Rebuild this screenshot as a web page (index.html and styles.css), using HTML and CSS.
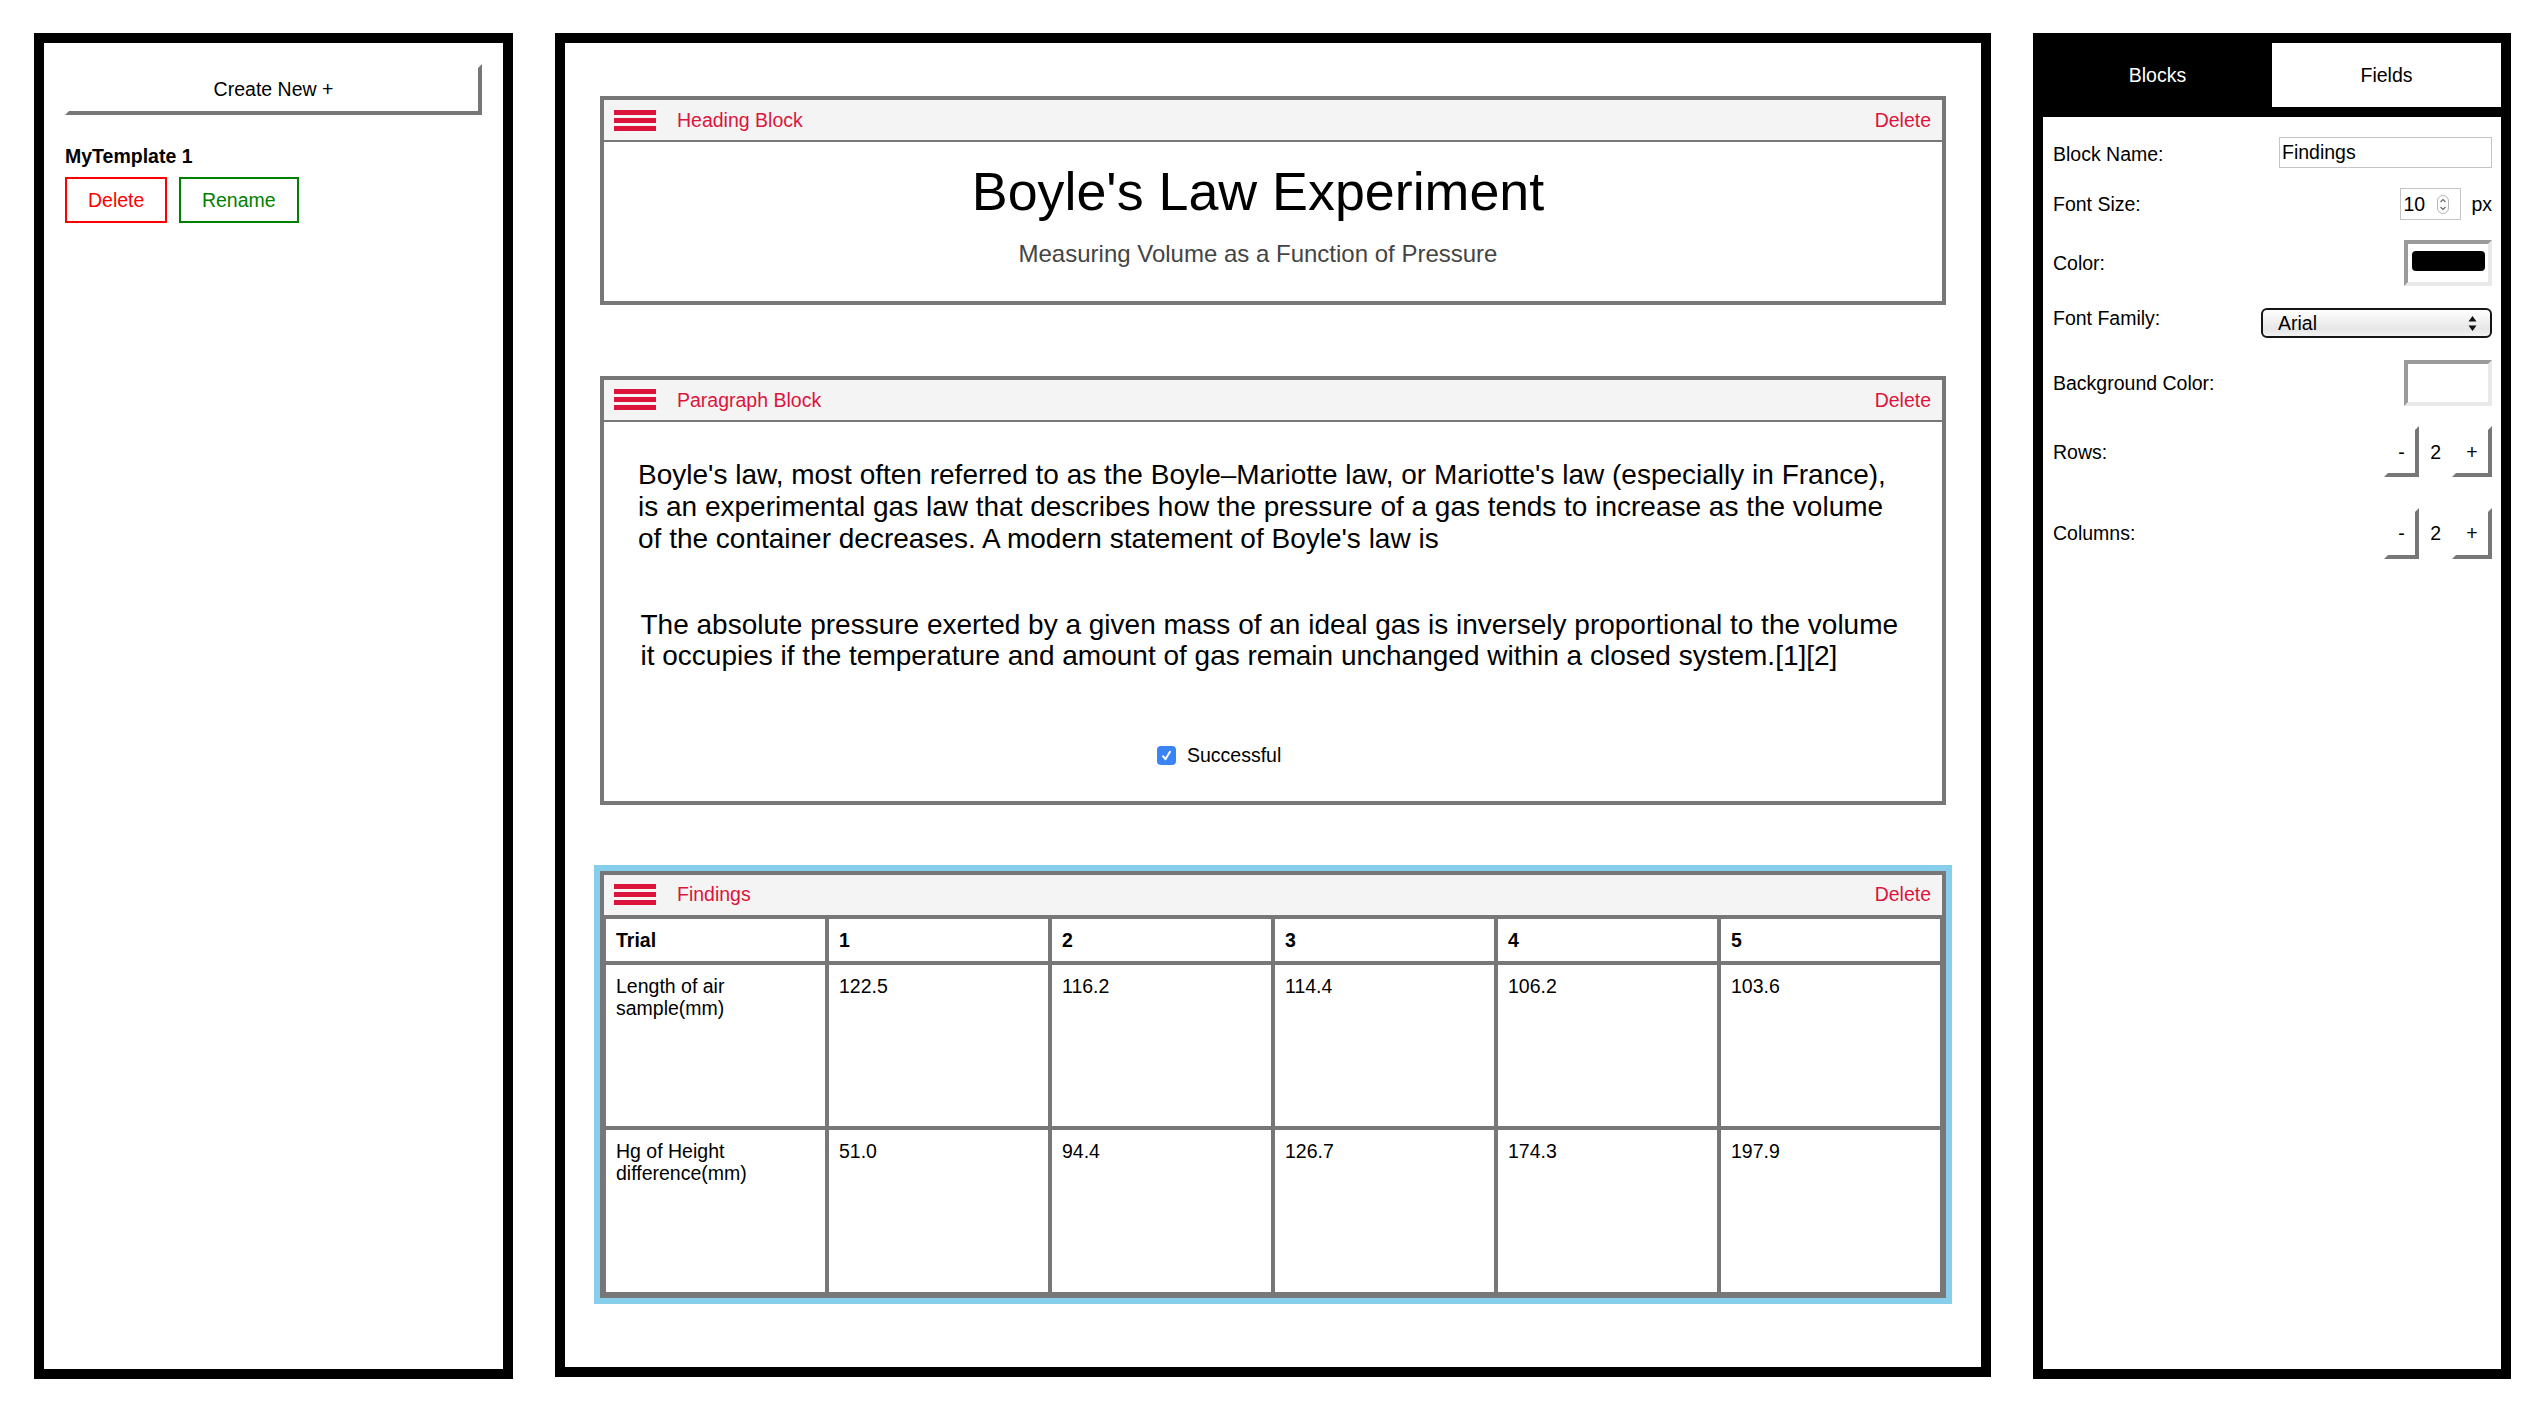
FILE: index.html
```html
<!DOCTYPE html>
<html lang="en">
<head>
<meta charset="utf-8">
<title>Template Builder</title>
<link rel="stylesheet" href="styles.css">
</head>
<body>
<div class="app">
  <aside class="panel panel-left">
    <button class="btn-3d btn-create">Create New +</button>
    <div class="template-name">MyTemplate 1</div>
    <div class="template-actions">
      <button class="btn-outline btn-red">Delete</button>
      <button class="btn-outline btn-green">Rename</button>
    </div>
  </aside>

  <main class="panel panel-middle">
    <section class="block">
      <div class="block-head">
        <span class="burger"><span></span><span></span><span></span></span>
        <span class="block-label">Heading Block</span>
        <span class="block-delete">Delete</span>
      </div>
      <div class="heading-body">
        <h1 class="title">Boyle's Law Experiment</h1>
        <p class="subtitle">Measuring Volume as a Function of Pressure</p>
      </div>
    </section>

    <section class="block block-paragraph">
      <div class="block-head">
        <span class="burger"><span></span><span></span><span></span></span>
        <span class="block-label">Paragraph Block</span>
        <span class="block-delete">Delete</span>
      </div>
      <div class="paragraph-body">
        <p class="para para-1">Boyle's law, most often referred to as the Boyle–Mariotte law, or Mariotte's law (especially in France), is an experimental gas law that describes how the pressure of a gas tends to increase as the volume of the container decreases. A modern statement of Boyle's law is</p>
        <p class="para para-2">The absolute pressure exerted by a given mass of an ideal gas is inversely proportional to the volume it occupies if the temperature and amount of gas remain unchanged within a closed system.[1][2]</p>
        <div class="check-row">
          <span class="checkbox"><svg width="13" height="13" viewBox="0 0 13 13"><path d="M3 7.2 L5.4 10.2 L10 2.8" stroke="#fff" stroke-width="2" fill="none" stroke-linecap="round" stroke-linejoin="round"/></svg></span>
          <span>Successful</span>
        </div>
      </div>
    </section>

    <section class="block block-findings">
      <div class="block-head">
        <span class="burger"><span></span><span></span><span></span></span>
        <span class="block-label">Findings</span>
        <span class="block-delete">Delete</span>
      </div>
      <table class="findings-table">
        <thead>
          <tr><th>Trial</th><th>1</th><th>2</th><th>3</th><th>4</th><th>5</th></tr>
        </thead>
        <tbody>
          <tr class="row-a">
            <td><div class="cell">Length of air sample(mm)</div></td>
            <td><div class="cell">122.5</div></td>
            <td><div class="cell">116.2</div></td>
            <td><div class="cell">114.4</div></td>
            <td><div class="cell">106.2</div></td>
            <td><div class="cell">103.6</div></td>
          </tr>
          <tr class="row-b">
            <td><div class="cell">Hg of Height difference(mm)</div></td>
            <td><div class="cell">51.0</div></td>
            <td><div class="cell">94.4</div></td>
            <td><div class="cell">126.7</div></td>
            <td><div class="cell">174.3</div></td>
            <td><div class="cell">197.9</div></td>
          </tr>
        </tbody>
      </table>
    </section>
  </main>

  <aside class="panel panel-right">
    <div class="tabs">
      <div class="tab tab-active">Blocks</div>
      <div class="tab tab-inactive">Fields</div>
    </div>
    <div class="form">
      <div class="form-row">
        <span class="label-down">Block Name:</span>
        <div class="text-input">Findings</div>
      </div>
      <div class="form-row">
        <span>Font Size:</span>
        <div class="num-group">
          <div class="num-input">
            <span>10</span>
            <svg class="spinner" width="12" height="19" viewBox="0 0 12 19"><rect x="0.5" y="0.5" width="11" height="18" rx="5.5" fill="#fbfbfb" stroke="#b8b8b8"/><path d="M3.5 7 L6 4.5 L8.5 7" stroke="#666" stroke-width="1.1" fill="none"/><path d="M3.5 12 L6 14.5 L8.5 12" stroke="#666" stroke-width="1.1" fill="none"/></svg>
          </div>
          <span class="unit">px</span>
        </div>
      </div>
      <div class="form-row">
        <span>Color:</span>
        <div class="color-box"><div class="swatch swatch-black"></div></div>
      </div>
      <div class="form-row">
        <span class="label-up">Font Family:</span>
        <div class="select">
          <span>Arial</span>
          <svg width="9" height="15" viewBox="0 0 9 15"><path d="M4.5 0 L8.5 5.5 L0.5 5.5 Z M0.5 9.5 L8.5 9.5 L4.5 15 Z" fill="#111"/></svg>
        </div>
      </div>
      <div class="form-row">
        <span>Background Color:</span>
        <div class="color-box"><div class="swatch swatch-white"></div></div>
      </div>
      <div class="form-row">
        <span>Rows:</span>
        <div class="stepper">
          <button class="btn-3d">-</button>
          <span class="step-value">2</span>
          <button class="btn-3d">+</button>
        </div>
      </div>
      <div class="form-row form-row-cols">
        <span>Columns:</span>
        <div class="stepper">
          <button class="btn-3d">-</button>
          <span class="step-value">2</span>
          <button class="btn-3d">+</button>
        </div>
      </div>
    </div>
  </aside>
</div>
</body>
</html>
```

FILE: styles.css
```css
* { box-sizing: border-box; }

body {
  margin: 0;
  background: #fff;
  color: #000;
  font-family: "Liberation Sans", Arial, Helvetica, sans-serif;
  font-size: 19.5px;
  line-height: 22.4px;
}

.app {
  display: flex;
  align-items: flex-start;
  gap: 42px;
  padding: 33px 36px 0 34px;
}

.panel {
  flex: none;
  border: 10px solid #000;
  background: #fff;
}

.panel-left { width: 479px; height: 1346px; padding: 21px; }
.panel-middle { width: 1436px; height: 1344px; padding: 53px 35px 0; }
.panel-right { width: 478px; height: 1346px; }

/* buttons */
.btn-3d {
  font: inherit;
  line-height: 22.4px;
  color: #000;
  background: #fff;
  border: 4px solid;
  border-color: #fff #777 #777 #fff;
  padding: 10.3px 10.3px;
  margin: 0;
  cursor: pointer;
}

.btn-create { display: block; width: 100%; }

.template-name {
  font-weight: bold;
  margin-top: 29.7px;
}

.template-actions {
  display: flex;
  gap: 11.5px;
  margin-top: 10px;
}

.btn-outline {
  font: inherit;
  line-height: 22.4px;
  background: #fff;
  border: 2px solid;
  padding: 9.8px 21px;
  margin: 0;
}

.btn-red { color: #ff0000; border-color: #ff0000; }
.btn-green { color: #008000; border-color: #008000; }

/* blocks */
.block {
  border: 4px solid #777;
  background: #fff;
}

.block-paragraph { margin-top: 71px; }
.block-findings { margin-top: 66px; outline: 6px solid #87ceeb; }

.block-head {
  display: flex;
  align-items: center;
  height: 42px;
  background: #f4f4f4;
  border-bottom: 2px solid #777;
  padding: 0 11px 0 10px;
  color: #dc143c;
}

.burger {
  display: flex;
  flex-direction: column;
  gap: 3px;
  width: 42px;
}

.burger span {
  display: block;
  height: 5px;
  background: #dc143c;
}

.block-label { margin-left: 21px; }
.block-delete { margin-left: auto; }

.heading-body {
  text-align: center;
  padding: 18.5px 30px 33.8px 0;
}

.title {
  font-size: 53.8px;
  line-height: 60.9px;
  font-weight: normal;
  margin: 0 0 18.2px;
}

.subtitle {
  font-size: 24px;
  line-height: 27.6px;
  color: #444;
  margin: 0;
}

.paragraph-body {
  padding: 37.5px 38px 34px 34px;
}

.para {
  font-size: 28px;
  line-height: 31.7px;
  margin: 0;
}

.para-1 { margin-bottom: 54.2px; }
.para-2 { margin-left: 2.5px; margin-bottom: 72px; }

.check-row {
  display: flex;
  align-items: center;
  padding-left: 519px;
}

.checkbox {
  width: 19px;
  height: 19px;
  border-radius: 4px;
  background: #3b84f5;
  margin-right: 11px;
  display: flex;
  align-items: center;
  justify-content: center;
}

/* table */
.findings-table {
  width: 100%;
  border-collapse: separate;
  border-spacing: 0;
  table-layout: fixed;
}

.findings-table th,
.findings-table td {
  border: 2px solid #777;
  padding: 10px;
  text-align: left;
  vertical-align: top;
  font-size: 19.5px;
  line-height: 22.4px;
}

.findings-table th { font-weight: bold; }

.row-a .cell { height: 141px; }
.row-b .cell { height: 142px; }

/* right panel */
.tabs {
  display: flex;
  border-bottom: 10px solid #000;
}

.tab {
  flex: 1;
  height: 64px;
  display: flex;
  align-items: center;
  justify-content: center;
}

.tab-active { background: #000; color: #fff; }
.tab-inactive { background: #fff; color: #000; }

.form {
  display: flex;
  flex-direction: column;
  gap: 20.5px;
  padding: 19.5px 9px 0 10px;
}

.form-row {
  display: flex;
  align-items: center;
  justify-content: space-between;
}

.form-row-cols { margin-top: 10px; }

.label-up { margin-bottom: 10px; }
.label-down { margin-top: 4px; }

.text-input {
  width: 213.5px;
  height: 31.3px;
  border: 1px solid #c4c4c4;
  padding-left: 2.5px;
  display: flex;
  align-items: center;
}

.num-group {
  display: flex;
  align-items: center;
}

.num-input {
  width: 61.5px;
  height: 31.7px;
  border: 1px solid #c4c4c4;
  padding: 0 11px 0 2.5px;
  display: flex;
  align-items: center;
  justify-content: space-between;
}

.unit { margin-left: 10px; }

.color-box {
  width: 88px;
  height: 46px;
  border: 4px solid;
  border-color: #9a9a9a #e8e8e8 #e8e8e8 #9a9a9a;
  padding: 7px 3px 11px 4px;
  background: #fff;
}

.swatch {
  height: 20px;
  border-radius: 4px;
}

.swatch-black { background: #000; }
.swatch-white { background: #fff; }

.select {
  width: 231px;
  height: 30.6px;
  border: 2px solid #161616;
  border-radius: 6px;
  background: linear-gradient(#ffffff, #e6e6e6 75%, #f2f2f2);
  display: flex;
  align-items: center;
  justify-content: space-between;
  padding: 0 13px 0 15px;
}

.stepper {
  display: flex;
  align-items: center;
}

.step-value { margin: 0 11px; }
```
